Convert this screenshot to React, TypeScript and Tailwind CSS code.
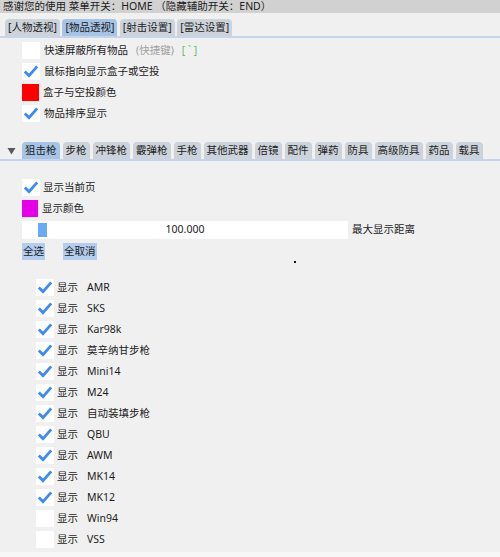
import React from 'react';

const FONT = { fontFamily: '"Noto Sans", "Noto Sans CJK SC", sans-serif' };

const TOP_TABS = ['[人物透视]', '[物品透视]', '[射击设置]', '[雷达设置]'];
const GUN_TABS = [
  '狙击枪', '步枪', '冲锋枪', '霰弹枪', '手枪', '其他武器', '倍镜', '配件',
  '弹药', '防具', '高级防具', '药品', '载具',
];

const GUNS: { name: string; on: boolean }[] = [
  { name: 'AMR', on: true },
  { name: 'SKS', on: true },
  { name: 'Kar98k', on: true },
  { name: '莫辛纳甘步枪', on: true },
  { name: 'Mini14', on: true },
  { name: 'M24', on: true },
  { name: '自动装填步枪', on: true },
  { name: 'QBU', on: true },
  { name: 'AWM', on: true },
  { name: 'MK14', on: true },
  { name: 'MK12', on: true },
  { name: 'Win94', on: false },
  { name: 'VSS', on: false },
];

function Check({ on }: { on: boolean }) {
  return (
    <div className="w-[18px] h-[17px] bg-white shrink-0 flex items-center justify-center">
      {on && (
        <svg width="18" height="17" viewBox="0 0 18 17">
          <polyline
            points="2.8,8.5 7,12.6 15.2,3.4"
            fill="none"
            stroke="#3d8bf0"
            strokeWidth="2.8"
            strokeLinejoin="miter"
          />
        </svg>
      )}
    </div>
  );
}

function Tab({ label, active }: { label: string; active: boolean }) {
  return (
    <div
      className={`h-[17px] px-[3px] shrink-0 whitespace-nowrap rounded-t-[4px] leading-[17px] text-[#222] ${
        active ? 'bg-[#a6c4e6]' : 'bg-[#cdd3da]'
      }`}
    >
      {label}
    </div>
  );
}

export default function App() {
  return (
    <div className="w-[500px] h-[557px] bg-[#f7f7f7] text-[10.5px] text-[#1c1c1c]" style={FONT}>
      <div className="h-[552px] bg-[#f0f0f0] flex flex-col">
        <div className="h-[13px] bg-[#d1d1d1] pl-[3px] leading-[13px] whitespace-nowrap">
          感谢您的使用 菜单开关：HOME （隐藏辅助开关：END）
        </div>

        <div className="mt-[6px] flex gap-[2.5px] pl-[5px]">
          {TOP_TABS.map((t) => (
            <Tab key={t} label={t} active={t === '[物品透视]'} />
          ))}
        </div>
        <div className="h-[2px] bg-[#c6d5ec]" />

        <div className="mt-[4px] flex flex-col gap-[4px] pl-[22px]">
          <div className="flex items-center h-[17px] gap-[4px]">
            <Check on={false} />
            <span>快速屏蔽所有物品</span>
            <span className="text-[#a0a0a0] ml-[4px]">(快捷键)</span>
            <span className="text-[#5cc06a] ml-[4px]">[ ` ]</span>
          </div>
          <div className="flex items-center h-[17px] gap-[4px]">
            <Check on />
            <span>鼠标指向显示盒子或空投</span>
          </div>
          <div className="flex items-center h-[17px] gap-[4px]">
            <div className="w-[17px] h-[17px] bg-[#ff0000]" />
            <span>盒子与空投颜色</span>
          </div>
          <div className="flex items-center h-[17px] gap-[4px]">
            <Check on />
            <span>物品排序显示</span>
          </div>
        </div>

        <div className="mt-[20px] flex items-end">
          <div className="w-[22px] h-[17px] flex items-center justify-center">
            <svg width="9" height="8" viewBox="0 0 9 8">
              <polygon points="0.5,1 8.5,1 4.5,7.5" fill="#5a5a5a" />
            </svg>
          </div>
          <div className="flex gap-[3px]">
            {GUN_TABS.map((t) => (
              <Tab key={t} label={t} active={t === '狙击枪'} />
            ))}
          </div>
        </div>
        <div className="h-[2px] bg-[#c6d5ec]" />

        <div className="mt-[18px] flex flex-col gap-[4px] pl-[22px]">
          <div className="flex items-center h-[17px] gap-[3px]">
            <Check on />
            <span>显示当前页</span>
          </div>
          <div className="flex items-center h-[17px] gap-[4px]">
            <div className="w-[16px] h-[17px] bg-[#e600e6]" />
            <span>显示颜色</span>
          </div>
          <div className="flex items-center h-[18px] gap-[4px]">
            <div className="relative w-[326px] h-[18px] bg-white flex items-center justify-center">
              <div className="absolute left-[16px] top-[2px] w-[9px] h-[14px] bg-[#6aa9f4]" />
              <span>100.000</span>
            </div>
            <span>最大显示距离</span>
          </div>
          <div className="flex items-center h-[17px] gap-[18px]">
            <div className="h-[17px] px-[1px] bg-[#b2cdef] leading-[17px]">全选</div>
            <div className="h-[17px] px-[1px] bg-[#b2cdef] leading-[17px]">全取消</div>
          </div>
        </div>

        <div className="h-[4px] pl-[294px] flex items-center">
          <div className="w-[2px] h-[2px] bg-[#111]" />
        </div>

        <div className="mt-[15px] flex flex-col gap-[4px] pl-[36px]">
          {GUNS.map((g) => (
            <div key={g.name} className="flex items-center h-[17px]">
              <Check on={g.on} />
              <span className="ml-[3px] w-[30px]">显示</span>
              <span>{g.name}</span>
            </div>
          ))}
        </div>
      </div>
    </div>
  );
}
